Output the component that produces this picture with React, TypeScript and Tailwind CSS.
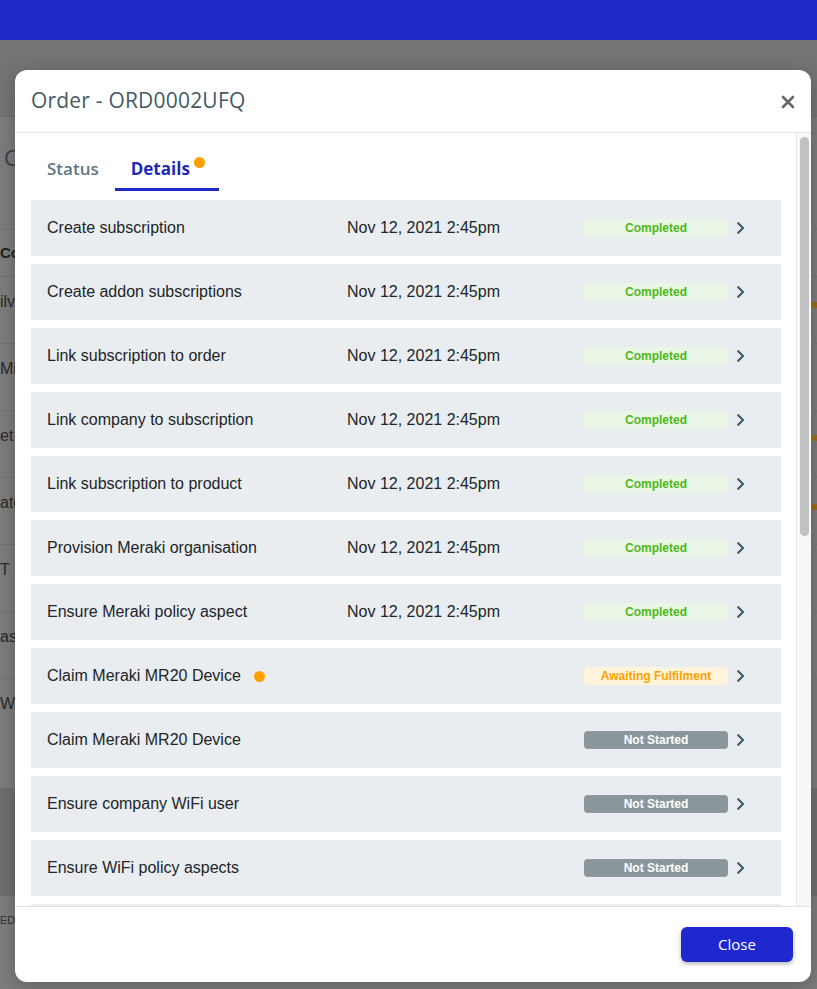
import React from "react";

type Step = { name: string; date?: string; status: "done" | "await" | "none"; dot?: boolean };

const steps: Step[] = [
  { name: "Create subscription", date: "Nov 12, 2021 2:45pm", status: "done" },
  { name: "Create addon subscriptions", date: "Nov 12, 2021 2:45pm", status: "done" },
  { name: "Link subscription to order", date: "Nov 12, 2021 2:45pm", status: "done" },
  { name: "Link company to subscription", date: "Nov 12, 2021 2:45pm", status: "done" },
  { name: "Link subscription to product", date: "Nov 12, 2021 2:45pm", status: "done" },
  { name: "Provision Meraki organisation", date: "Nov 12, 2021 2:45pm", status: "done" },
  { name: "Ensure Meraki policy aspect", date: "Nov 12, 2021 2:45pm", status: "done" },
  { name: "Claim Meraki MR20 Device", status: "await", dot: true },
  { name: "Claim Meraki MR20 Device", status: "none" },
  { name: "Ensure company WiFi user", status: "none" },
  { name: "Ensure WiFi policy aspects", status: "none" },
  { name: "Ensure WiFi policy aspects", status: "none" },
];

function Badge({ status }: { status: Step["status"] }) {
  if (status === "done")
    return (
      <span className="w-[144px] h-[18px] rounded-[4px] bg-[#ebf7e6] text-[#4cb81a] text-[12px] font-bold flex items-center justify-center">
        Completed
      </span>
    );
  if (status === "await")
    return (
      <span className="w-[144px] h-[18px] rounded-[4px] bg-[#fff5dd] text-[#ffa000] text-[12px] font-bold flex items-center justify-center">
        Awaiting Fulfilment
      </span>
    );
  return (
    <span className="w-[144px] h-[18px] rounded-[4px] bg-[#89969c] text-white text-[12px] font-bold flex items-center justify-center">
      Not Started
    </span>
  );
}

function Chevron() {
  return (
    <svg width="16" height="16" viewBox="0 0 16 16" fill="none">
      <path d="M6.2 3.2 L11 8 L6.2 12.8" stroke="#455a64" strokeWidth="2.2" strokeLinecap="round" strokeLinejoin="round" />
    </svg>
  );
}

const bgRows = ["ilv", "Mik", "et", "ate", "T I", "as"];

export default function App() {
  return (
    <div className="relative w-[817px] h-[989px] overflow-hidden bg-[#7d7d7d] font-['Liberation_Sans',Arial,sans-serif]">
      {/* background page (dimmed) */}
      <div className="flex flex-col">
        <div className="h-10 bg-[#1f27c6]" />
        <div className="h-[77px] bg-[#757575] border-b border-[#6d6d6d]" />
        <div className="h-[113px] flex items-start pt-[24px] pl-[4px] text-[22px] text-[#34424a] font-['Open_Sans',sans-serif] border-b border-[#727272]">
          C
        </div>
        <div className="h-[47px] flex items-center text-[15px] font-bold text-[#222] border-b border-[#707070]">
          Cor
        </div>
        {bgRows.map((t) => (
          <div key={t} className="h-[67px] flex items-start pt-[13px] text-[16px] text-[#2a2a2a] border-b border-[#727272]">
            {t}
          </div>
        ))}
        <div className="h-[109px] flex items-start pt-[13px] text-[16px] text-[#2a2a2a]">Wi-</div>
        <div className="h-[107px] bg-[#6f6f6f]" />
        <div className="h-[50px] flex items-center text-[11px] text-[#333] border-t border-[#6a6a6a]">ED -</div>
      </div>
      <span className="absolute left-[812px] top-[302px] w-[6px] h-[6px] bg-[#9a6a1a]" />
      <span className="absolute left-[812px] top-[435px] w-[6px] h-[6px] bg-[#9a6a1a]" />
      <span className="absolute left-[812px] top-[504px] w-[6px] h-[6px] bg-[#9a6a1a]" />

      {/* modal */}
      <div className="absolute left-[15px] top-[70px] w-[796px] h-[912px] bg-white rounded-[12px] flex flex-col overflow-hidden shadow-[0_4px_20px_rgba(0,0,0,0.25)]">
        <div className="h-[63px] shrink-0 flex items-center justify-between pl-4 pr-[16px] border-b border-[#e0e3e6]">
          <h1 className="text-[21px] text-[#455a64] font-['Open_Sans',sans-serif] font-medium tracking-[0.2px]">
            Order - ORD0002UFQ
          </h1>
          <svg width="14" height="14" viewBox="0 0 14 14" className="mt-[1px]">
            <path d="M2 2 L12 12 M12 2 L2 12" stroke="#666" strokeWidth="2.6" strokeLinecap="round" />
          </svg>
        </div>

        <div className="flex-1 flex min-h-0">
          <div className="flex-1 min-w-0 overflow-hidden pl-4 pr-[15px] pt-4">
            <div className="flex h-[42px] font-['Open_Sans',sans-serif] text-[17px] font-semibold">
              <div className="px-4 flex items-center text-[#5f7684] border-b-[3px] border-transparent">Status</div>
              <div className="relative pl-4 pr-[29px] flex items-center text-[#1f2ab8] font-bold border-b-[3px] border-[#1f28c8]">
                Details
                <span className="absolute left-[79px] top-[8px] w-[11px] h-[11px] rounded-full bg-[#ffa000]" />
              </div>
            </div>
            <div className="mt-[9px] flex flex-col gap-2">
              {steps.map((s, i) => (
                <div key={i} className="h-14 shrink-0 bg-[#e9edf0] flex items-center pl-4 pr-[33px] text-[16px] text-[#212529]">
                  <div className="w-[300px] flex items-center">
                    {s.name}
                    {s.dot && <span className="ml-[13px] w-[11px] h-[11px] rounded-full bg-[#ffa000]" />}
                  </div>
                  <div className="flex-1">{s.date}</div>
                  <Badge status={s.status} />
                  <div className="ml-1">
                    <Chevron />
                  </div>
                </div>
              ))}
            </div>
          </div>
          <div className="w-[15px] shrink-0 bg-[#f8f8f8] border-l border-[#e6e6e6] pt-[4px] flex justify-center">
            <div className="w-[9px] h-[399px] rounded-full bg-[#c1c1c1]" />
          </div>
        </div>

        <div className="h-[76px] shrink-0 border-t border-[#e0e3e6] flex items-center justify-end pr-[18px]">
          <button className="w-[112px] h-[35px] rounded-[6px] bg-[#1f28cf] text-white text-[15px] font-['Open_Sans',sans-serif] font-medium shadow-[0_2px_4px_rgba(0,0,0,0.3)]">
            Close
          </button>
        </div>
      </div>
    </div>
  );
}
